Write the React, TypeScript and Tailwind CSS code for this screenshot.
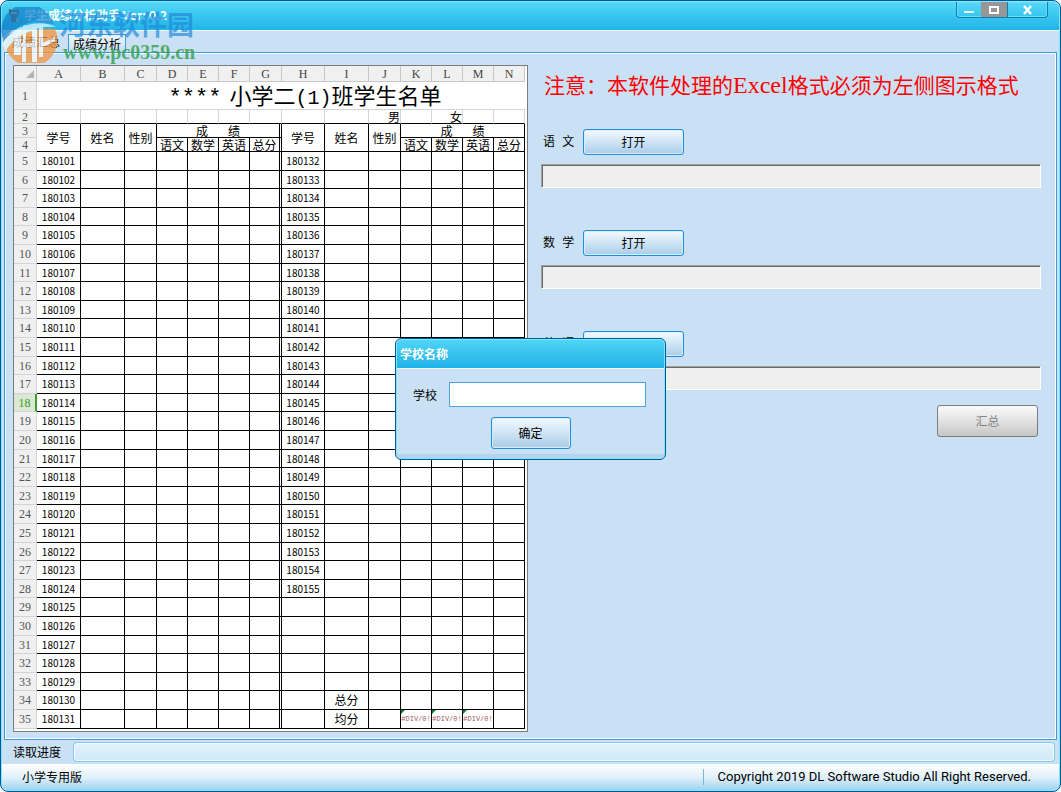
import { useState } from "react";
import { clsx } from "clsx";

const COLUMNS = [
  { name: "A", width: "w-[44px]" },
  { name: "B", width: "w-[44px]" },
  { name: "C", width: "w-[32px]" },
  { name: "D", width: "w-[31px]" },
  { name: "E", width: "w-[31px]" },
  { name: "F", width: "w-[31px]" },
  { name: "G", width: "w-[32px]" },
  { name: "H", width: "w-[43px]" },
  { name: "I", width: "w-[44px]" },
  { name: "J", width: "w-[32px]" },
  { name: "K", width: "w-[31px]" },
  { name: "L", width: "w-[31px]" },
  { name: "M", width: "w-[31px]" },
  { name: "N", width: "w-[31px]" },
];

const SUBJECTS = ["语文", "数学", "英语", "总分"];
const FIRST_ID = 180101;
const SECOND_ID = 180132;
const ROW_COUNT = 31;
const SECOND_COUNT = 24;
const ACTIVE_ROW = 18;

const BUTTON =
  "rounded-[3px] border border-[#1e8fd8] bg-linear-to-b from-[#f4faff] via-[#cfe4f5] to-[#a9cce9] text-xs text-black inset-shadow-[0_0_0_1px_#d9ecfa]";

function RowHead({ n }: { n: number }) {
  const active = n === ACTIVE_ROW;
  return (
    <th
      scope="row"
      className={clsx(
        "border-b border-[#d4d4d4] p-0 text-center font-['Liberation_Serif',serif] text-xs leading-3 font-normal",
        active
          ? "border-r-2 border-r-[#3f9c28] bg-[#d9e8d2] text-[#3f9c28]"
          : "border-r bg-[#f0f0f0] text-[#555]"
      )}
    >
      {n}
    </th>
  );
}

// Every body cell of the sheet; column G closes the left half with a double rule.
function bodyValue(col: string, index: number) {
  const row = index + 5;
  if (col === "A") return String(FIRST_ID + index);
  if (col === "H" && index < SECOND_COUNT) return String(SECOND_ID + index);
  if (col === "I" && row === 34) return "总分";
  if (col === "I" && row === 35) return "均分";
  return "";
}

function Sheet() {
  const cell = "border-r border-b border-black p-0 text-center font-normal";
  return (
    <div className="shrink-0 self-start border border-[#7c7c7c] bg-white pr-0.5 pb-0.5">
      <table className="w-[511px] table-fixed border-separate border-spacing-0 text-xs leading-3 text-black">
        <colgroup>
          <col className="w-[23px]" />
          {COLUMNS.map((c) => (
            <col key={c.name} className={c.width} />
          ))}
        </colgroup>
        <thead>
          <tr className="h-4 bg-[#f0f0f0]">
            <td className="border-r border-b border-[#c8c8c8] p-0">
              <svg viewBox="0 0 10 10" className="ml-3 size-2 fill-[#b4b4b4]">
                <path d="M10 0V10H0Z" />
              </svg>
            </td>
            {COLUMNS.map((c) => (
              <th
                key={c.name}
                scope="col"
                className="border-r border-b border-[#c8c8c8] p-0 text-center font-['Liberation_Serif',serif] font-normal text-[#444]"
              >
                {c.name}
              </th>
            ))}
          </tr>
        </thead>
        <tbody>
          <tr className="h-7">
            <RowHead n={1} />
            <td colSpan={14} className="border-b border-[#d4d4d4] p-0 pb-1 pl-12 text-[22px] leading-6 whitespace-nowrap">
              <div className="flex h-[23px] items-baseline justify-center">
                <span className="pr-2 font-['Liberation_Mono',monospace]">****</span>
                <span>小学二</span>
                <span className="font-['Liberation_Mono',monospace] text-xl leading-6">(1)</span>
                <span>班学生名单</span>
              </div>
            </td>
          </tr>
          <tr className="h-[14px]">
            <RowHead n={2} />
            {COLUMNS.map((c) => (
              <td key={c.name} className="border-r border-b border-r-[#d4d4d4] border-b-black p-0 text-right leading-3">
                {c.name === "J" && "男"}
                {c.name === "L" && "女"}
              </td>
            ))}
          </tr>
          <tr className="h-[14px]">
            <RowHead n={3} />
            {[0, 1].map((half) => (
              <HalfHeader key={half} left={half === 0} cell={cell} />
            ))}
          </tr>
          <tr className="h-[14px]">
            <RowHead n={4} />
            {[...SUBJECTS, ...SUBJECTS].map((s, i) => (
              <th key={i} scope="col" className={clsx(cell, "whitespace-nowrap", i === 3 && "border-r-3 [border-right-style:double]")}>
                {s}
              </th>
            ))}
          </tr>
          {Array.from({ length: ROW_COUNT }, (_, i) => (
            <tr key={i} className={(i % 5) % 2 ? "h-[18px]" : "h-[19px]"}>
              <RowHead n={i + 5} />
              {COLUMNS.map(({ name }) => {
                const isError = i === ROW_COUNT - 1 && "KLM".includes(name);
                return (
                  <td
                    key={name}
                    className={clsx(
                      cell,
                      name === "G" && "border-r-3 [border-right-style:double]",
                      (name === "A" || name === "H") && "text-[10px]",
                      isError && "relative overflow-hidden"
                    )}
                  >
                    {bodyValue(name, i)}
                    {isError && (
                      <>
                        <svg viewBox="0 0 4 4" className="absolute top-0 left-0 size-1 fill-green-700">
                          <path d="M0 0H4L0 4Z" />
                        </svg>
                        <span className="block font-['Liberation_Mono',monospace] text-[7px] leading-3 text-[#a05a5a]">#DIV/0!</span>
                      </>
                    )}
                  </td>
                );
              })}
            </tr>
          ))}
        </tbody>
      </table>
    </div>
  );
}

function HalfHeader({ left, cell }: { left: boolean; cell: string }) {
  return (
    <>
      {["学号", "姓名", "性别"].map((t) => (
        <th key={t} scope="col" rowSpan={2} className={cell}>
          {t}
        </th>
      ))}
      <th scope="colgroup" colSpan={4} className={clsx(cell, left && "border-r-3 [border-right-style:double]")}>
        <div className="flex h-3 justify-center gap-5">
          <span>成</span>
          <span>绩</span>
        </div>
      </th>
    </>
  );
}

function FilePicker({ id, label }: { id: string; label: string }) {
  return (
    <div className="mb-[42px]">
      <div className="mb-[9px] flex items-center">
        <label htmlFor={id} className="w-[42px] pt-0.5 pl-0.5 font-['Liberation_Mono','Noto_Sans_CJK_SC',monospace] text-xs">
          {label}
        </label>
        <button type="button" className={clsx(BUTTON, "h-[26px] w-[101px]")}>
          打开
        </button>
      </div>
      <input
        id={id}
        readOnly
        className="block h-6 w-full border border-t-[#a0a0a0] border-r-white border-b-white border-l-[#a0a0a0] bg-[#efefef] px-1 text-xs inset-shadow-[1px_1px_0_#696969]"
      />
    </div>
  );
}

function SchoolDialog() {
  const [school, setSchool] = useState("");
  return (
    <div className="absolute inset-0 flex items-center justify-center pt-1.5">
      <div
        role="dialog"
        aria-labelledby="school-title"
        className="w-[271px] overflow-hidden rounded-md border border-[#005a9c] bg-[#cae0f4] inset-shadow-[0_0_0_1px_#7de9fa]"
      >
        <h2
          id="school-title"
          className="m-px mb-0 flex h-[29px] items-center rounded-t border-b border-[#f0faff] bg-linear-to-b from-[#4fd6f6] via-[#37c2ee] to-[#1eb3e8] px-[3px] text-xs font-bold text-white"
        >
          学校名称
        </h2>
        <div className="flex items-center justify-between pt-[13px] pr-[19px] pl-[17px]">
          <label htmlFor="school" className="text-xs">
            学校
          </label>
          <input
            id="school"
            value={school}
            onChange={(e) => setSchool(e.target.value)}
            className="h-[25px] w-[197px] border border-[#4fa3d8] bg-white px-1 text-xs outline-none"
          />
        </div>
        <div className="mx-px mb-px border-b-4 border-[#b4d3ee] pt-2.5 pb-[5px] text-center">
          <button type="button" className={clsx(BUTTON, "h-8 w-20")}>
            确定
          </button>
        </div>
      </div>
    </div>
  );
}

function Watermark() {
  return (
    <div className="pointer-events-none absolute top-1.5 left-0 flex items-start">
      <svg viewBox="0 0 58 56" className="h-14 w-[58px] opacity-75">
        <path d="M2 32A26 26 0 0 1 46 6L50 14C34 12 14 18 2 32Z" fill="#1682c8" />
        <path d="M46 6A27 27 0 0 1 53 17L30 15L12 24L2 36V30Z" fill="#2b8fd2" />
        <path d="M6 40C14 28 34 20 54 22A26 26 0 0 1 6 44Z" fill="#f2953a" />
        <path d="M1 37C8 24 34 9 55 20C38 18 16 26 5 43Z" fill="#e9f7fd" />
        <path d="M13 24L20 20V48H13ZM22 19L25 18V55H21V40H13V36H22ZM31 22L36 18V55H31V40H25V36H31ZM38 19L42 17V36L54 30V34L42 40V50H38Z" fill="#f5fbff" />
      </svg>
      <div className="pt-px whitespace-nowrap">
        <div className="h-8 text-[27px] leading-8 font-bold text-[#208bd8]/70">河东软件园</div>
        <div className="pl-1 font-['Liberation_Serif',serif] text-xl leading-6 font-bold text-[#2f9e48]/80">www.pc0359.cn</div>
      </div>
    </div>
  );
}

function TitleBar() {
  return (
    <header className="flex h-[29px] shrink-0 items-start justify-between rounded-t-md border-b border-[#f0faff] bg-linear-to-b from-[#54d8f8] via-[#38c6f0] to-[#22b4e8] pr-[11px] pl-1.5">
      <div className="flex items-center gap-1 pt-[5px] text-xs font-bold text-white">
        <svg viewBox="0 0 12 16" className="h-4 w-3">
          <path d="M1 2L4 3H8L11 2V7L9 9V15H3V9L1 7Z" fill="#6b4b3e" />
          <path d="M3 5H9V7H3ZM8 11L11 13V15H8Z" fill="#d9b08c" />
        </svg>
        <h1>学生成绩分析助手 Ver: 0.2</h1>
      </div>
      <div className="flex h-4 overflow-hidden rounded-b border border-t-0 border-[#0b7fb5] inset-shadow-[0_0_0_1px_#6fdcf7]">
        <button type="button" aria-label="最小化" className="flex w-6 items-center justify-center">
          <svg viewBox="0 0 12 10" className="h-2.5 w-3">
            <path d="M1 6H11V8H1Z" fill="#e4f6fc" />
          </svg>
        </button>
        <button type="button" aria-label="最大化" className="flex w-[26px] items-center justify-center bg-[#979797]">
          <svg viewBox="0 0 12 10" className="h-2.5 w-3">
            <path d="M2 2H10V8H2Z" fill="none" stroke="white" strokeWidth="2" />
          </svg>
        </button>
        <button type="button" aria-label="关闭" className="flex w-10 items-center justify-center border-l border-[#0b7fb5]">
          <svg viewBox="0 0 12 10" className="h-2.5 w-3">
            <path d="M2 1L9 9M9 1L2 9" stroke="white" strokeWidth="2.5" />
          </svg>
        </button>
      </div>
    </header>
  );
}

export default function App() {
  return (
    <div className="bg-white font-['Noto_Sans_CJK_SC',sans-serif] text-black">
      <div className="relative flex min-h-screen flex-col overflow-hidden rounded-lg border border-[#00569a] bg-[#cae0f4] p-px inset-shadow-[0_0_0_1px_#7de9fa]">
        <TitleBar />

        <div role="tablist" className="flex h-[21px] items-end pl-0.5 text-xs">
          <button type="button" role="tab" aria-selected="true" className="h-[21px] w-16">
            成绩汇总
          </button>
          <button
            type="button"
            role="tab"
            aria-selected="false"
            className="h-[18px] w-[58px] border border-b-0 border-[#3c9bd9] bg-linear-to-b from-[#eef7fd] to-[#c4def2] whitespace-nowrap"
          >
            成绩分析
          </button>
        </div>

        <main className="mx-0.5 flex flex-1 gap-[13px] border border-[#3c9bd9] px-2 pt-3 pb-[7px] inset-shadow-[0_0_0_1px_white]">
          <Sheet />
          <section className="min-w-0 flex-1 pr-[7px]">
            <p className="mb-7 h-9 pt-[3px] pl-[3px] text-[21px] leading-8 text-[#ff0000] whitespace-nowrap">
              注意：本软件处理的<span className="font-['Liberation_Serif',serif] text-2xl leading-8">Excel</span>格式必须为左侧图示格式
            </p>
            <FilePicker id="chinese" label="语 文" />
            <FilePicker id="math" label="数 学" />
            <FilePicker id="english" label="英 语" />
            <div className="-mt-[27px] flex justify-end pr-[3px]">
              <button
                type="button"
                disabled
                className="h-8 w-[101px] rounded-[3px] border border-[#7d7d7d] bg-linear-to-b from-[#fafafa] via-[#e2e2e2] to-[#c6c6c6] text-xs text-[#848484]"
              >
                汇总
              </button>
            </div>
          </section>
        </main>

        <div className="flex h-6 shrink-0 items-center pr-1 pl-[11px] text-xs">
          <span id="progress-label" className="w-[60px]">
            读取进度
          </span>
          <div
            role="progressbar"
            aria-labelledby="progress-label"
            aria-valuenow={0}
            className="h-5 flex-1 rounded border border-[#82ccf2] bg-linear-to-b from-[#e3f2fc] to-[#d0e9f9] inset-shadow-[0_0_0_1px_#f4fbff]"
          />
        </div>

        <footer className="flex h-[26px] shrink-0 items-center justify-between rounded-b-md bg-linear-to-b from-white via-[#e2f1fa] to-[#9fd3ef] pr-7 pl-5 text-xs">
          <span>小学专用版</span>
          <span className="border-l border-[#7fb2dc] pl-3.5 font-['Roboto',sans-serif] text-[13px] leading-4">
            Copyright 2019 DL Software Studio All Right Reserved.
          </span>
        </footer>

        <Watermark />
        <SchoolDialog />
      </div>
    </div>
  );
}
